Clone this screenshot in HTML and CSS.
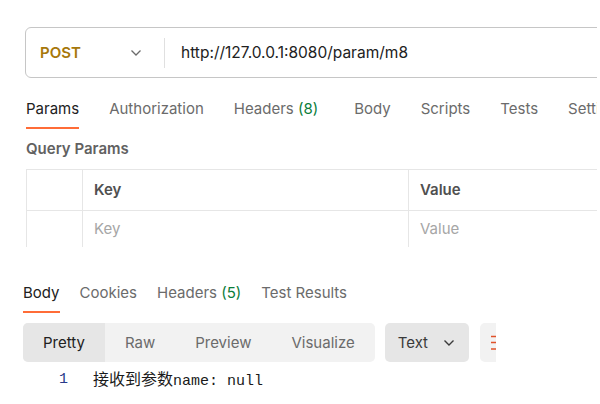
FILE: index.html
```html
<!DOCTYPE html>
<html>
<head>
<meta charset="utf-8">
<link rel="stylesheet" href="styles.css">
</head>
<body>
<div class="page">
  <section class="request">
    <div class="url-bar">
      <div class="method">
        <span class="method-name">POST</span>
        <svg class="chev" width="12" height="8" viewBox="0 0 12 8"><polyline points="1.5,1.5 6,6 10.5,1.5" fill="none" stroke="#6b6b6b" stroke-width="1.3"/></svg>
      </div>
      <div class="divider"></div>
      <div class="url">http://127.0.0.1:8080/param/m8</div>
    </div>
    <nav class="tabs req-tabs">
      <span class="tab active">Params</span>
      <span class="tab">Authorization</span>
      <span class="tab wide">Headers <span class="count">(8)</span></span>
      <span class="tab">Body</span>
      <span class="tab">Scripts</span>
      <span class="tab">Tests</span>
      <span class="tab">Settings</span>
    </nav>
    <div class="section-title">Query Params</div>
    <div class="params-table">
      <div class="cell"></div>
      <div class="cell head">Key</div>
      <div class="cell head">Value</div>
      <div class="cell last"></div>
      <div class="cell last ph">Key</div>
      <div class="cell last ph">Value</div>
    </div>
  </section>
  <section class="response">
    <nav class="tabs res-tabs">
      <span class="tab active">Body</span>
      <span class="tab">Cookies</span>
      <span class="tab">Headers <span class="count">(5)</span></span>
      <span class="tab">Test Results</span>
    </nav>
    <div class="toolbar">
      <div class="segmented">
        <span class="seg selected">Pretty</span>
        <span class="seg">Raw</span>
        <span class="seg">Preview</span>
        <span class="seg">Visualize</span>
      </div>
      <div class="format">
        <span>Text</span>
        <svg class="chev" width="12" height="8" viewBox="0 0 12 8"><polyline points="1.5,1.5 6,6 10.5,1.5" fill="none" stroke="#3a3a3a" stroke-width="1.4"/></svg>
      </div>
      <div class="wrap-btn">
        <svg width="16" height="16" viewBox="0 0 16 16"><g stroke="#e0522a" stroke-width="1.5"><line x1="0" y1="1.5" x2="16" y2="1.5"/><line x1="0" y1="7.5" x2="16" y2="7.5"/><line x1="0" y1="14" x2="16" y2="14"/></g></svg>
      </div>
    </div>
    <div class="code">
      <span class="ln">1</span>
      <span class="line"><span class="cjk">接收到参数</span>name: null</span>
    </div>
  </section>
</div>
</body>
</html>
```
FILE: styles.css
```css
html, body {
  margin: 0;
  padding: 0;
  background: #ffffff;
}
body {
  font-family: Inter, "Noto Sans", sans-serif;
  font-size: 14px;
  color: #212121;
  overflow: hidden;
}
.page {
  width: 600px;
  height: 404px;
  overflow: hidden;
}
.request {
  width: 597px;
  overflow: hidden;
  padding-top: 27px;
}
.url-bar {
  margin-left: 25px;
  margin-right: -20px;
  height: 49px;
  border: 1px solid #c6c6c6;
  border-radius: 6px;
  display: flex;
  align-items: center;
}
.method {
  padding-left: 14px;
  display: flex;
  align-items: center;
  box-sizing: border-box;
  width: 138px;
}
.method-name {
  color: #a7780a;
  font-weight: 600;
  font-size: 15px;
  width: 90px;
}
.divider {
  width: 1px;
  height: 30px;
  background: #e0e0e0;
}
.url {
  padding-left: 16px;
  font-size: 15.5px;
  color: #212121;
}
.tabs {
  display: flex;
  white-space: nowrap;
}
.tab {
  color: #6b6b6b;
  line-height: 20px;
  padding-bottom: 8px;
  border-bottom: 2px solid transparent;
}
.tab.active {
  color: #212121;
  border-bottom-color: #ff6c37;
}
.count {
  color: #0a7d3a;
}
.req-tabs {
  margin-top: 21px;
  margin-left: 26px;
  gap: 30px;
  font-size: 15px;
}
.req-tabs .wide {
  margin-right: 6px;
}
.section-title {
  margin-left: 26px;
  margin-top: 10px;
  font-weight: 600;
  font-size: 15px;
  color: #616161;
  line-height: 20px;
}
.params-table {
  margin-top: 10px;
  margin-left: 26px;
  margin-right: -40px;
  display: grid;
  grid-template-columns: 56px 326px 1fr;
  border-top: 1px solid #e6e6e6;
  border-left: 1px solid #e6e6e6;
}
.cell {
  border-right: 1px solid #e6e6e6;
  border-bottom: 1px solid #e6e6e6;
  height: 40px;
  line-height: 40px;
  padding-left: 11px;
  font-size: 15px;
}
.cell.head {
  font-weight: 600;
  color: #505050;
}
.cell.last {
  border-bottom: none;
  height: 36px;
  line-height: 36px;
}
.cell.ph {
  color: #a6a6a6;
}
.response {
  padding-left: 23px;
  padding-top: 36px;
}
.res-tabs {
  gap: 20px;
  font-size: 15px;
}
.toolbar {
  margin-top: 10px;
  display: flex;
  width: 473px;
  overflow: hidden;
  height: 40px;
}
.segmented {
  display: flex;
  flex-shrink: 0;
  background: #f2f2f2;
  border-radius: 5px;
  overflow: hidden;
  height: 39px;
}
.seg {
  padding: 0 20px;
  line-height: 39px;
  font-size: 15px;
  color: #6b6b6b;
}
.seg.selected {
  background: #e6e6e6;
  color: #212121;
}
.format {
  margin-left: 10px;
  width: 84px;
  flex-shrink: 0;
  box-sizing: border-box;
  background: #e6e6e6;
  border-radius: 5px;
  display: flex;
  align-items: center;
  padding-left: 13px;
  gap: 15px;
  color: #3a3a3a;
  font-size: 15px;
  height: 39px;
}
.wrap-btn {
  margin-left: 11px;
  width: 40px;
  height: 39px;
  background: #f2f2f2;
  border-radius: 5px;
  flex-shrink: 0;
  display: flex;
  align-items: center;
  padding-left: 11px;
  box-sizing: border-box;
}
.code {
  margin-top: 4px;
  display: flex;
  align-items: center;
  line-height: 22px;
  font-family: "Liberation Mono", "Noto Sans CJK SC", monospace;
  font-size: 15px;
  color: #1a1a1a;
}
.ln {
  width: 45px;
  text-align: right;
  color: #2a3a8a;
  padding-right: 25px;
}
.cjk {
  font-family: "Noto Sans CJK SC", sans-serif;
  font-size: 16px;
}
```
